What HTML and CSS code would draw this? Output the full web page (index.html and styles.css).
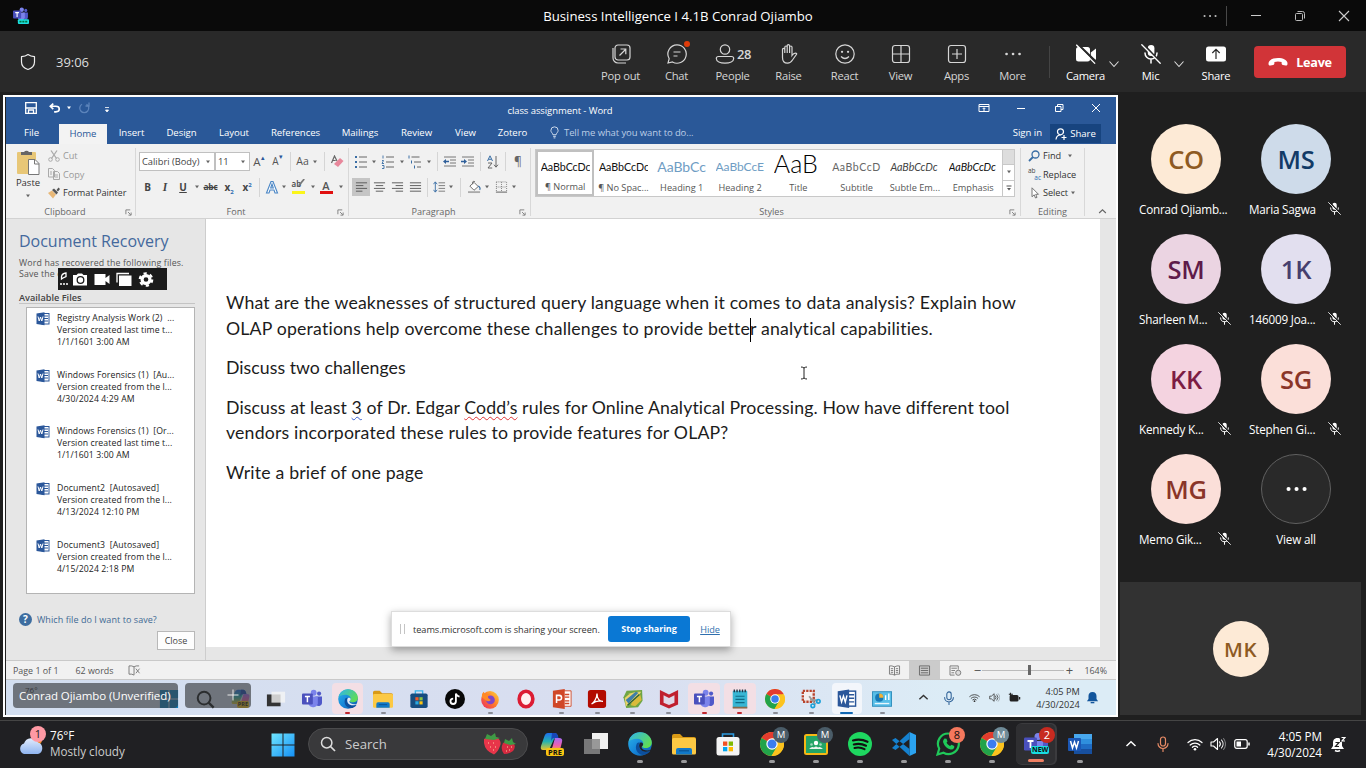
FILE: index.html
```html
<!DOCTYPE html>
<html lang="en">
<head>
<meta charset="utf-8">
<title>Business Intelligence I 4.1B Conrad Ojiambo</title>
<link rel="stylesheet" href="styles.css">
</head>
<body>
<svg class="defs" aria-hidden="true">
  <defs>
    <linearGradient id="gEdge" x1="0" y1="0" x2="1" y2="1"><stop offset="0" stop-color="#2bb5e8"/><stop offset=".55" stop-color="#1583d8"/><stop offset="1" stop-color="#0c59a4"/></linearGradient>
    <linearGradient id="gEdge2" x1="0" y1="0" x2="1" y2=".6"><stop offset="0" stop-color="#2fb4ee"/><stop offset="1" stop-color="#5fdc55"/></linearGradient>
    <linearGradient id="gWin" x1="0" y1="0" x2="1" y2="1"><stop offset="0" stop-color="#6fe6ff"/><stop offset="1" stop-color="#1590f5"/></linearGradient>
    <linearGradient id="gCopL" x1="0" y1="0" x2="0" y2="1"><stop offset="0" stop-color="#1d6ff0"/><stop offset=".5" stop-color="#25b3b0"/><stop offset="1" stop-color="#e8c52a"/></linearGradient>
    <linearGradient id="gCopR" x1="0" y1="0" x2="0" y2="1"><stop offset="0" stop-color="#a46bf5"/><stop offset=".6" stop-color="#ee5fae"/><stop offset="1" stop-color="#f59a4a"/></linearGradient>
    <linearGradient id="gCloud" x1="0" y1="0" x2="0" y2="1"><stop offset="0" stop-color="#e2ecfd"/><stop offset="1" stop-color="#8fb4f0"/></linearGradient>
    <linearGradient id="gFox" x1="1" y1="0" x2="0" y2="1"><stop offset="0" stop-color="#ffd93b"/><stop offset=".5" stop-color="#ff7a2a"/><stop offset="1" stop-color="#e8256b"/></linearGradient>
  </defs>
  <symbol id="mic-off" viewBox="0 0 20 20"><rect x="6.800" y="1" width="6.600" height="11" rx="3.300" fill="currentColor"/><path d="M4 9a6 6 0 0 0 12 0M10 15v4" fill="none" stroke="currentColor" stroke-width="1.500" stroke-linecap="round"/><path d="M2 0l18 19" stroke="var(--slash)" stroke-width="2.200"/><path d="M.8.8l18.400 18.400" stroke="currentColor" stroke-width="1.300" stroke-linecap="round"/></symbol>
  <symbol id="chev-d" viewBox="0 0 12 12"><path d="M1.500 3.500L6 8.500l4.500-5" fill="none" stroke="currentColor" stroke-width="1.100"/></symbol>
  <symbol id="chev-u" viewBox="0 0 12 12"><path d="M1.500 8L6 3.800 10.500 8" fill="none" stroke="currentColor" stroke-width="1.500"/></symbol>
  <symbol id="caret" viewBox="0 0 6 4"><path d="M1 .6h4L3 3.200z" fill="currentColor"/></symbol>
  <symbol id="launch" viewBox="0 0 8 8"><path d="M1 6V1h5M3.500 3.500l3 3M7 4v3H4" fill="none" stroke="#777" stroke-width="1"/></symbol>
  <symbol id="word16" viewBox="0 0 14 14"><rect x="6" y="1.500" width="7" height="10.500" fill="#fff" stroke="#2b579a"/><path d="M8 4h4M8 6.500h4M8 9h4" stroke="#2b579a"/><path d="M.5 1.500L8.500.3v13L.5 12z" fill="#2b579a"/><path d="M2 4.500l1.200 4.500 1.300-4 1.300 4L7 4.500" fill="none" stroke="#fff" stroke-width="1"/></symbol>
  <symbol id="edge" viewBox="0 0 24 24"><circle cx="12" cy="12" r="11.800" fill="url(#gEdge)"/><path d="M.6 9.800C2 3.800 6.800.2 12 .2c6.800 0 11.800 5 11.800 10.200 0 3.600-3 5.600-6 5.600-2.400 0-3.800-.8-3.800-1.600 0-.7 1.200-1.200 1.200-3C15.200 8.600 12 6.800 8.800 6.800 5 6.800 2 8.200.6 9.800z" fill="url(#gEdge2)"/><path d="M9 11.200c-2 3.400-1.600 9.400 4.400 11.600 3.600.6 7.200-1.200 9-4-5 2-11.400.4-11.600-5.600 0-1 .4-2 1.200-2.400-1-.4-2.200-.4-3 .4z" fill="#0c4f9e"/><path d="M12 10.800c-1.800 2.600-.8 6.600 2.600 8.200 2.800 1.200 6 .6 8.200-1-4.400 1-8.600 0-9.200-2.600-.2-1 1.600-1.400 1.600-3.400-.4-1.600-2.200-2-3.200-1.200z" fill="var(--hole)"/></symbol>
  <symbol id="folder" viewBox="0 0 24 24"><path d="M0 4q0-2 2-2h6l3 3h11q2 0 2 2v4H0z" fill="#d99a16"/><rect y="6" width="24" height="16.500" rx="1.500" fill="#fcc944"/><path d="M4 22.500V18q0-2 2-2h12q2 0 2 2v4.500z" fill="#1179c9"/><path d="M7 18.800h10" stroke="#0b5394" stroke-width="1.200"/></symbol>
  <symbol id="chrome" viewBox="0 0 24 24"><circle cx="12" cy="12" r="12" fill="#fcc31e"/><path d="M12 12L1.600 6A12 12 0 0 1 22.400 6z" fill="#e33b2e"/><path d="M12 12L1.600 6A12 12 0 0 0 11.500 24L17 14.800z" fill="#22a34a"/><path d="M12 6.200h10.500A12 12 0 0 1 11.500 24l5.600-9.200z" fill="#fcc31e"/><circle cx="12" cy="12" r="5.700" fill="#fff"/><circle cx="12" cy="12" r="4.500" fill="#3b7ded"/></symbol>
  <symbol id="teams" viewBox="0 0 24 24"><circle cx="14" cy="4.500" r="3.500" fill="#7b83eb"/><circle cx="20.500" cy="5.500" r="2.500" fill="#5059c9"/><path d="M16 9h8v7a4 4 0 0 1-7 3z" fill="#5059c9"/><path d="M8 9h11v8a6 6 0 0 1-11 2z" fill="#7b83eb"/><rect x="0" y="5.500" width="13" height="13" rx="1.200" fill="#4a50bd"/><path d="M3.500 9h6M6.500 9v7" stroke="#fff" stroke-width="1.800"/></symbol>
  <symbol id="copilot" viewBox="0 0 24 24"><path d="M8 1h7q2 0 3 3l-4 3-5 11H3q-3 0-2-4L4.500 4Q5.500 1 8 1z" fill="url(#gCopL)"/><path d="M15 6h4q4 0 3 4l-2 8H9q3 0 4-5z" fill="url(#gCopR)"/><path d="M12 1h3q2 0 3 3l.6 2H14q-2 0-3 3z" fill="#1746b8"/></symbol>
  <symbol id="wifi" viewBox="0 0 16 16"><path d="M1 6.500a10 10 0 0 1 14 0M3.200 9a7 7 0 0 1 9.600 0M5.400 11.300a3.800 3.800 0 0 1 5.200 0" fill="none" stroke="currentColor" stroke-width="1.200" stroke-linecap="round"/><circle cx="8" cy="13.300" r="1.300" fill="currentColor"/></symbol>
  <symbol id="vol" viewBox="0 0 16 16"><path d="M1 6h2.500L7.500 2.500v11L3.500 10H1z" fill="none" stroke="currentColor" stroke-width="1.100" stroke-linejoin="round"/><path d="M9.500 5.800a3.500 3.500 0 0 1 0 4.400M11.500 4a6 6 0 0 1 0 8" fill="none" stroke="currentColor" stroke-width="1.100" stroke-linecap="round"/><path d="M13.500 2.500a8.500 8.500 0 0 1 0 11" fill="none" stroke="currentColor" stroke-width="1.100" stroke-linecap="round" opacity=".4"/></symbol>
  <symbol id="mic" viewBox="0 0 16 16"><rect x="5.500" y="1" width="5" height="9" rx="2.500" fill="none" stroke="currentColor" stroke-width="1.200"/><path d="M3 7.500a5 5 0 0 0 10 0M8 12.500V15.500" fill="none" stroke="currentColor" stroke-width="1.200" stroke-linecap="round"/></symbol>
</svg>

<header class="titlebar">
  <svg class="tb-logo" viewBox="0 0 16 16"><use href="#teams" width="16" height="14"/><rect x="5.500" y="11.500" width="10.500" height="4.500" rx="1" fill="#1ce0e0"/><path d="M7 13.800h7.500" stroke="#074" stroke-width="1.500" stroke-dasharray="2 .7"/></svg>
  <span class="tb-title">Business Intelligence I 4.1B Conrad Ojiambo</span>
  <div class="tb-controls">
    <svg viewBox="0 0 16 16"><path d="M2.500 8h.1M8 8h.1M13.500 8h.1" stroke="#bbb" stroke-width="2" stroke-linecap="round"/></svg>
    <i></i>
    <svg viewBox="0 0 16 16"><path d="M3 7.500h10" stroke="#ccc"/></svg>
    <svg viewBox="0 0 16 16"><rect x="3.500" y="5.500" width="7" height="7" rx="1" fill="none" stroke="#bbb"/><path d="M5.500 3.500h5q2 0 2 2v5" fill="none" stroke="#bbb"/></svg>
    <svg viewBox="0 0 16 16"><path d="M3 3l10 10M13 3L3 13" stroke="#ccc" stroke-width="1.100"/></svg>
  </div>
</header>

<nav class="callbar">
  <svg class="shield" viewBox="0 0 18 18"><path d="M9 1.500C7 3 5 3.500 2.500 3.600V9c0 3.800 2.700 6.300 6.500 7.500 3.800-1.200 6.500-3.700 6.500-7.500V3.600C13 3.500 11 3 9 1.500z" fill="none" stroke="#eee" stroke-width="1.200" stroke-linejoin="round"/></svg>
  <span class="timer">39:06</span>
  <div class="calls">
    <div class="cb"><svg viewBox="0 0 20 20"><rect x="4" y="1" width="15" height="15" rx="3"/><path d="M2 4v10a5 5 0 0 0 5 5h8M8.500 11.500l6-6M9.500 5h5.300v5.300"/></svg><span>Pop out</span></div>
    <div class="cb"><svg viewBox="0 0 20 20"><path d="M10 .8a9.200 9.200 0 1 1-4.500 17.200L1 19l1.200-4.300A9.200 9.200 0 0 1 10 .8zM6.500 8h7M6.500 12h4"/></svg><b class="dot"></b><span>Chat</span></div>
    <div class="cb people"><div><svg viewBox="0 0 20 20"><circle cx="10" cy="5.500" r="4.700"/><path d="M3.500 12.500h13q2.200 0 2.200 2c0 3-4 4.700-8.700 4.700s-8.700-1.700-8.700-4.700q0-2 2.200-2z"/></svg><em>28</em></div><span>People</span></div>
    <div class="cb"><svg viewBox="0 0 20 20"><path d="M3.500 11V5.500q0-1.200 1.100-1.200t1.200 1.200V9 3.200Q5.800 2 7 2t1.200 1.200V9 1.800Q8.200.7 9.400.7t1.200 1.200V9 3.200Q10.600 2 11.800 2T13 3.200v8.300c1-1.500 2.500-2.700 4.200-2.200q.9.300.2 1.200L13.500 16c-1.200 2-2.500 3.200-5 3.200-3.500 0-5-2.700-5-5.700z"/></svg><span>Raise</span></div>
    <div class="cb"><svg viewBox="0 0 20 20"><circle cx="10" cy="10" r="9.200"/><path d="M6 12.500q4 4 8 0"/><path d="M7 7.800h.1M13 7.800h.1" stroke-width="2.200" stroke-linecap="round"/></svg><span>React</span></div>
    <div class="cb"><svg viewBox="0 0 20 20"><rect x="1.500" y="1.500" width="17" height="17" rx="2.500"/><path d="M10 1.500v17M1.500 10h17"/></svg><span>View</span></div>
    <div class="cb"><svg viewBox="0 0 20 20"><rect x="1.500" y="1.500" width="17" height="17" rx="2.500"/><path d="M10 5v10M5 10h10"/></svg><span>Apps</span></div>
    <div class="cb"><svg viewBox="0 0 20 20"><path d="M3.500 10h.1M10 10h.1M16.500 10h.1" stroke-width="2.600" stroke-linecap="round"/></svg><span>More</span></div>
    <i class="cb-sep"></i>
    <div class="cb on"><svg viewBox="0 0 20 20"><rect x="0" y="3" width="14" height="14.500" rx="2.500" fill="#fff" stroke="none"/><path d="M14.800 8.500L20 4.500v11.500l-5.200-3.500z" fill="#fff" stroke="none"/><path d="M1.500 0l19 18.500" stroke="#292929" stroke-width="2.400"/><path d="M.3.800l18.800 18.800" stroke="#fff" stroke-width="1.300"/></svg><span>Camera</span></div>
    <svg class="cv"><use href="#chev-d"/></svg>
    <div class="cb on mic"><svg class="plain"><use href="#mic-off"/></svg><span>Mic</span></div>
    <svg class="cv"><use href="#chev-d"/></svg>
    <div class="cb on"><svg viewBox="0 0 20 20"><rect x="0" y="2.500" width="20" height="15" rx="2.500" fill="#fff" stroke="none"/><path d="M10 15V5.500M6.300 9L10 5.300 13.700 9" stroke="#292929"/></svg><span>Share</span></div>
  </div>
  <button class="leave"><svg viewBox="0 0 20 10"><path d="M10 1c5 0 9.500 2 9.500 5.500 0 1.800-.6 2.200-2 2l-2.600-.6c-1-.3-1.300-.8-1.300-1.700V5Q10 4 6.400 5v1.200c0 .9-.3 1.400-1.300 1.700l-2.600.6c-1.400.2-2-.2-2-2C.5 3 5 1 10 1z" fill="#fff"/></svg>Leave</button>
</nav>

<main class="meeting">
  <section class="stage">
    <div class="w-title">
      <div class="qat">
        <svg viewBox="0 0 12 12"><path d="M.7.700h10.600v10.600H.7zM.7 6h10.600M3.500 11V8h5v3" fill="none" stroke="#fff" stroke-width="1.300"/></svg>
        <svg viewBox="0 0 14 12"><path d="M5 .8L1.500 4 5 7.200M1.500 4H8q4 0 4 3.200T8 10.500H6" fill="none" stroke="#fff" stroke-width="1.900"/></svg>
        <svg class="car"><use href="#caret"/></svg>
        <svg viewBox="0 0 12 12"><path d="M4 2.200a4.500 4.500 0 1 0 4.500 0M11 .5v3.500H7.500" fill="none" stroke="#5c84bb" stroke-width="1.300"/></svg>
        <svg viewBox="0 0 12 12"><path d="M4 5.500h4M4.500 8h3L6 10z" stroke="#fff" fill="#fff" stroke-width=".8"/></svg>
      </div>
      <span class="w-name">class assignment - Word</span>
      <div class="w-ctl">
        <svg viewBox="0 0 12 12"><path d="M1 2.500h10v7H1zM1 4.500h10M6 9V6M4.700 7L6 5.700 7.300 7" fill="none" stroke="#fff"/></svg>
        <svg viewBox="0 0 12 12"><path d="M2 6.500h8" stroke="#fff"/></svg>
        <svg viewBox="0 0 12 12"><path d="M2.500 4.500h5.500v5h-5.500zM4.500 4.500v-2H10v5H8" fill="none" stroke="#fff"/></svg>
        <svg viewBox="0 0 12 12"><path d="M2 2l8 8M10 2l-8 8" stroke="#fff"/></svg>
      </div>
    </div>
    <div class="w-tabs">
      <span class="file-tab">File</span><span class="active">Home</span><span>Insert</span><span>Design</span><span>Layout</span><span>References</span><span>Mailings</span><span>Review</span><span>View</span><span>Zotero</span>
      <span class="tell"><svg viewBox="0 0 10 14"><path d="M3.200 9.500Q3 8.300 2 7.200 1 6 1 4.700A4 4 0 0 1 9 4.700Q9 6 8 7.200 7 8.300 6.800 9.500zM3.500 11.300h3M4 13h2" fill="none" stroke="#dfe8f5"/></svg>Tell me what you want to do...</span>
      <span class="signin">Sign in</span>
      <span class="wshare"><svg viewBox="0 0 12 12"><circle cx="5.500" cy="3.800" r="3" fill="none" stroke="#fff" stroke-width="1.200"/><path d="M1 11.500Q1.500 7 5.500 7M9 7v5M6.500 9.500h5" fill="none" stroke="#fff" stroke-width="1.200"/></svg>Share</span>
    </div>

    <div class="ribbon">
      <div class="grp clip">
        <div class="paste"><svg viewBox="0 0 24 26"><rect x="1" y="3" width="19" height="22" rx="1" fill="#e8c777"/><path d="M5 6V3h3a3 3 0 0 1 5 0h3v3z" fill="#666"/><path d="M12.500 10.500h6.500l4 4v11H12.500z" fill="#fff" stroke="#777"/><path d="M18.500 10.500V15H23" fill="none" stroke="#777"/></svg><span>Paste</span><svg class="car"><use href="#caret"/></svg></div>
        <div class="clip-list">
          <div class="dim"><svg viewBox="0 0 12 12"><path d="M3 .5l5.500 8M9 .5L3.500 8.500" stroke="#aaa" stroke-width="1.300"/><circle cx="2.500" cy="9.500" r="1.800" fill="none" stroke="#aaa"/><circle cx="9.500" cy="9.500" r="1.800" fill="none" stroke="#aaa"/></svg>Cut</div>
          <div class="dim"><svg viewBox="0 0 12 12"><path d="M.5.500h4l2 2v6.500h-6zM5.500 3.500h4l2 2V11.500h-6z" fill="#f1f1f1" stroke="#aaa"/><path d="M2 4h2M2 6h2M7 7h3M7 9h3" stroke="#aaa"/></svg>Copy</div>
          <div><svg viewBox="0 0 12 12"><path d="M0 6l4-2.500L8 7.500 5 11.500z" fill="#e8b878"/><path d="M4 3l2-1.500L10 5.500 8.500 7.500zM8.500 3L10.500.5l1.500 1.500L10 4.500z" fill="#555"/></svg>Format Painter</div>
        </div>
        <div class="glabel">Clipboard<svg><use href="#launch"/></svg></div>
      </div>

      <div class="grp font">
        <div class="frow1">
          <div class="combo">Calibri (Body)<svg class="car"><use href="#caret"/></svg></div>
          <div class="combo">11<svg class="car"><use href="#caret"/></svg></div>
          <div class="ga">A<sup>▴</sup></div><div class="ga small">A<sup>▾</sup></div><i></i>
          <div class="ga aa">Aa<svg class="car"><use href="#caret"/></svg></div><i></i>
          <svg class="ic" viewBox="0 0 14 14"><path d="M1.500 8L4.500 1 7 6M2.700 5.500h3" fill="none" stroke="#666" stroke-width="1.200"/><path d="M4 9l6-6 3.500 3-5.500 6z" fill="#e8879b"/></svg>
        </div>
        <div class="frow2">
          <b>B</b><b class="it">I</b><b class="un">U</b><svg class="car"><use href="#caret"/></svg><b class="st">abc</b><b>x<sub>2</sub></b><b>x<sup>2</sup></b><i></i>
          <svg class="ic" viewBox="0 0 14 14"><path d="M1.500 13L6 1.500h2L12.500 13H10L9 10H5l-1 3zM5.700 8h2.600L7 4z" fill="#fff" stroke="#4a86c5" stroke-width="1.100"/></svg><svg class="car"><use href="#caret"/></svg>
          <div class="hl">ab<svg viewBox="0 0 14 14"><path d="M12.500 0L6 8" stroke="#777" stroke-width="2"/></svg></div><svg class="car"><use href="#caret"/></svg>
          <div class="fc">A</div><svg class="car"><use href="#caret"/></svg>
        </div>
        <div class="glabel">Font<svg><use href="#launch"/></svg></div>
      </div>

      <div class="grp para">
        <div class="prow1">
          <svg class="ic" viewBox="0 0 14 14"><path d="M5 2h8M5 7h8M5 12h8" stroke="#666"/><path d="M1 2h2M1 7h2M1 12h2" stroke="#3a6ea5" stroke-width="2"/></svg><svg class="car"><use href="#caret"/></svg>
          <svg class="ic" viewBox="0 0 14 14"><path d="M5 2h8M5 7h8M5 12h8" stroke="#666"/><path d="M2 .5v3M1 5.500h1.500L1 8.500h2M1 10.500h2v3H1" fill="none" stroke="#3a6ea5" stroke-width=".9"/></svg><svg class="car"><use href="#caret"/></svg>
          <svg class="ic" viewBox="0 0 14 14"><path d="M3.500 2h8M6 7h7M9 12h4" stroke="#666"/><path d="M1 .5v3M3.500 5.500v3M6.500 10.500v3" stroke="#3a6ea5"/></svg><svg class="car"><use href="#caret"/></svg><i></i>
          <svg class="ic" viewBox="0 0 14 14"><path d="M1 2h12M7 5h6M7 8h6M1 11h12" stroke="#777"/><path d="M0 6.500l3-2.500v1.700h3v1.600H3V9z" fill="#2f5f9a"/></svg>
          <svg class="ic" viewBox="0 0 14 14"><path d="M1 2h12M7 5h6M7 8h6M1 11h12" stroke="#777"/><path d="M6 6.500L3 4v1.700H0v1.600h3V9z" fill="#2f5f9a"/></svg><i></i>
          <svg class="ic" viewBox="0 0 14 14"><path d="M1.500 6L4 .8 6.500 6M2.500 4.300h3" fill="none" stroke="#3a6ea5"/><path d="M2 8h4l-4 5h4.200" fill="none" stroke="#666"/><path d="M10 1v11M8 9.700l2 2.500 2-2.500" fill="none" stroke="#666"/></svg><i></i>
          <span class="pil">¶</span>
        </div>
        <div class="prow2">
          <div class="sel"><svg class="ic" viewBox="0 0 14 14"><path d="M1 2.500h12M1 5.500h8M1 8.500h12M1 11.500h7" stroke="#555"/></svg></div>
          <svg class="ic" viewBox="0 0 14 14"><path d="M1 2.500h12M3 5.500h8M1 8.500h12M3 11.500h8" stroke="#555"/></svg>
          <svg class="ic" viewBox="0 0 14 14"><path d="M1 2.500h12M5 5.500h8M1 8.500h12M5 11.500h8" stroke="#555"/></svg>
          <svg class="ic" viewBox="0 0 14 14"><path d="M1 2.500h12M1 5.500h12M1 8.500h12M1 11.500h12" stroke="#555"/></svg><i></i>
          <svg class="ic" viewBox="0 0 14 14"><path d="M6 2.500h7M6 5.500h7M6 8.500h7M6 11.500h7" stroke="#777"/><path d="M2.500 1.500v11M.5 4l2-2.500 2 2.500M.5 10l2 2.500 2-2.500" fill="none" stroke="#3a6ea5"/></svg><svg class="car"><use href="#caret"/></svg><i></i>
          <svg class="ic" viewBox="0 0 14 14"><path d="M2 6l4.500-4L11 6.500 6.500 10.500zM5 4V1.500q1.500-1.500 2.500 0" fill="#fff" stroke="#666"/><path d="M11 6q3 2 1.500 4" stroke="#3a6ea5" fill="none" stroke-width="1.300"/><path d="M0 12.500h13" stroke="#aaa" stroke-width="2"/></svg><svg class="car"><use href="#caret"/></svg>
          <svg class="ic" viewBox="0 0 14 14"><path d="M1.500 1.500h11v11M1.500 1.500v11M7 1.500v11M1.500 7h11" fill="none" stroke="#777" stroke-dasharray="1 1.200"/><path d="M1 12.500h12" stroke="#555"/></svg><svg class="car"><use href="#caret"/></svg>
        </div>
        <div class="glabel">Paragraph<svg><use href="#launch"/></svg></div>
      </div>

      <div class="grp styles">
        <div class="gallery">
          <div class="sty picked"><p>AaBbCcDc</p><span>¶ Normal</span></div>
          <div class="sty"><p>AaBbCcDc</p><span>¶ No Spac...</span></div>
          <div class="sty h1"><p>AaBbCc</p><span>Heading 1</span></div>
          <div class="sty h2"><p>AaBbCcE</p><span>Heading 2</span></div>
          <div class="sty tt"><p>AaB</p><span>Title</span></div>
          <div class="sty sb"><p>AaBbCcD</p><span>Subtitle</span></div>
          <div class="sty se"><p>AaBbCcDc</p><span>Subtle Em...</span></div>
          <div class="sty em"><p>AaBbCcDc</p><span>Emphasis</span></div>
          <div class="gscroll"><div></div><div><svg class="car"><use href="#caret"/></svg></div><div><svg viewBox="0 0 6 6"><path d="M.5 1h5" stroke="#555"/><path d="M1 3h4L3 5.500z" fill="#555"/></svg></div></div>
        </div>
        <div class="glabel">Styles<svg><use href="#launch"/></svg></div>
      </div>

      <div class="grp edit">
        <div class="elist">
          <div><svg viewBox="0 0 12 12"><circle cx="7.500" cy="4.500" r="3.500" fill="none" stroke="#3a6ea5" stroke-width="1.300"/><path d="M5 7L1 11" stroke="#3a6ea5" stroke-width="1.800"/></svg>Find <svg class="car far"><use href="#caret"/></svg></div>
          <div><span class="rep"><span>ab</span><u>ac</u></span>Replace</div>
          <div><svg viewBox="0 0 12 12"><path d="M4 .8v9l2.200-2L7.500 11l1.500-.6L7.700 7.300h2.800z" fill="#fff" stroke="#777"/></svg>Select<svg class="car"><use href="#caret"/></svg></div>
        </div>
        <div class="glabel">Editing</div>
      </div>
      <svg class="collapse"><use href="#chev-u"/></svg>
    </div>

    <div class="w-body">
      <aside class="recovery">
        <h1>Document Recovery</h1>
        <p>Word has recovered the following files.<br>Save the ones you wish to keep.</p>
        <h2>Available Files</h2>
        <div class="files">
          <div class="file"><svg><use href="#word16"/></svg><div>Registry Analysis Work (2)&nbsp; ...<br>Version created last time t...<br>1/1/1601 3:00 AM</div></div>
          <div class="file"><svg><use href="#word16"/></svg><div>Windows Forensics (1)&nbsp; [Au...<br>Version created from the l...<br>4/30/2024 4:29 AM</div></div>
          <div class="file"><svg><use href="#word16"/></svg><div>Windows Forensics (1)&nbsp; [Or...<br>Version created last time t...<br>1/1/1601 3:00 AM</div></div>
          <div class="file"><svg><use href="#word16"/></svg><div>Document2&nbsp; [Autosaved]<br>Version created from the l...<br>4/13/2024 12:10 PM</div></div>
          <div class="file"><svg><use href="#word16"/></svg><div>Document3&nbsp; [Autosaved]<br>Version created from the l...<br>4/15/2024 2:18 PM</div></div>
        </div>
        <div class="which"><b>?</b>Which file do I want to save?</div>
        <div class="close">Close</div>
        <div class="capture">
          <svg class="mini" viewBox="0 0 8 14"><path d="M1.500 7V4.500Q2 1.500 6 1v3.500L3 6z" fill="none" stroke="#fff" stroke-width="1.300"/><path d="M0 12h2M3 12h2M6 12h2" stroke="#fff" stroke-width="1.500"/></svg>
          <svg viewBox="0 0 16 14"><path d="M1 2.500h3.500L6 1h4l1.500 1.500H15V13H1z" fill="#fff"/><circle cx="8.500" cy="7.500" r="3.300" fill="#fff" stroke="#1b1b1b" stroke-width="1.300"/></svg>
          <svg viewBox="0 0 16 14"><path d="M.5 1.500h11v4l4-3v9l-4-3v4H.5z" fill="#fff"/></svg>
          <svg viewBox="0 0 16 14"><path d="M1 10V1h12" fill="none" stroke="#fff" stroke-width="1.300"/><rect x="3" y="3" width="12.500" height="10.500" fill="#fff"/></svg>
          <svg viewBox="0 0 16 16"><circle cx="8" cy="8" r="4.200" fill="none" stroke="#fff" stroke-width="3.400"/><circle cx="8" cy="8" r="6.600" fill="none" stroke="#fff" stroke-width="2.400" stroke-dasharray="3.456 3.456"/></svg>
        </div>
      </aside>
      <article class="page">
        <p class="wide">What are the weaknesses of structured query language when it comes to data analysis? Explain how</p>
        <p class="wide end">OLAP operations help overcome these challenges to provide bette<i class="cursor"></i>r analytical capabilities.</p>
        <p class="end short">Discuss two challenges</p>
        <p>Discuss at least <span class="gram">3</span> of Dr. Edgar <span class="spell">Codd’s</span> rules for Online Analytical Processing. How have different tool</p>
        <p class="end wide">vendors incorporated these rules to provide features for OLAP?</p>
        <p class="wide">Write a brief of one page</p>
        <svg class="ibeam" viewBox="0 0 8 14"><path d="M1 1q2 0 3 1 1-1 3-1M4 2v10M1 13q2 0 3-1 1 1 3 1" fill="none" stroke="#222"/></svg>
      </article>
      <div class="sharing"><i></i><span>teams.microsoft.com is sharing your screen.</span><b>Stop sharing</b><u>Hide</u></div>
    </div>

    <div class="w-status">
      <span>Page 1 of 1</span><span class="words">62 words</span>
      <svg class="proof" viewBox="0 0 14 12"><path d="M6.500 2Q4 .5 1 1v9q3-.5 5.500 1V2q2-1.500 5.500-1M8.500 4l4 5M12.500 4l-4 5" fill="none" stroke="#777"/></svg>
      <div class="views">
        <div><svg viewBox="0 0 14 12"><path d="M7 2Q4 .5 1.500 1v9q3-.5 5.500 1 2.500-1.500 5.500-1V1Q10 .5 7 2v9M3 4h2.500M3 6h2.500M3 8h2.500M8.500 4H11M8.500 6H11M8.500 8H11" fill="none" stroke="#777"/></svg></div>
        <div class="cur"><svg viewBox="0 0 14 12"><path d="M1.500 1h11v10h-11zM3 3.500h8M3 6h8M3 8.500h8" fill="none" stroke="#666"/></svg></div>
        <div><svg viewBox="0 0 14 12"><path d="M10 5V1H1v10h5M2.500 3.500h6M2.500 6h4M2.500 8.500h3" fill="none" stroke="#777"/><circle cx="10" cy="8.500" r="2.800" fill="#ddd" stroke="#777"/></svg></div>
      </div>
      <div class="slider"><em>−</em><div></div><em>+</em></div><span>164%</span>
    </div>

    <div class="s-task">
      <div class="s-apps">
        <div><svg viewBox="0 0 22 22"><path d="M1 1h9.500v9.500H1zM11.500 1H21v9.500h-9.500zM1 11.500h9.500V21H1zM11.500 11.500H21V21h-9.500z" fill="#0a84c8"/></svg></div>
        <div><svg viewBox="0 0 22 22"><circle cx="10" cy="10" r="7" fill="none" stroke="#111" stroke-width="2.200"/><path d="M15 15l5.500 5.500" stroke="#111" stroke-width="2.500"/></svg></div>
        <div><svg><use href="#copilot"/></svg><b class="pre">PRE</b></div>
        <div><svg viewBox="0 0 22 22"><rect x="1" y="6" width="15" height="13" fill="#333"/><rect x="6" y="3" width="15" height="12" fill="#f5f5f5" opacity=".8"/></svg></div>
        <div><svg><use href="#teams"/></svg></div>
        <div class="hot"><svg><use href="#edge"/></svg><s></s></div>
        <div><svg><use href="#folder"/></svg><s></s></div>
        <div><svg viewBox="0 0 22 22"><path d="M7 6V2h8v4" fill="none" stroke="#39b3ea" stroke-width="1.500"/><rect x="1.500" y="5" width="19" height="16" rx="2" fill="#164d80"/><path d="M7 9h3.500v3.500H7z" fill="#f05a28"/><path d="M11.500 9H15v3.500h-3.500z" fill="#8cc63e"/><path d="M7 13.500h3.500V17H7z" fill="#29a9e1"/><path d="M11.500 13.500H15V17h-3.500z" fill="#fdc50f"/></svg></div>
        <div><svg viewBox="0 0 22 22"><circle cx="11" cy="11" r="11" fill="#080808"/><path d="M12 5v8.500a3 3 0 1 1-3-3M12 5q1 3 4 3.500" fill="none" stroke="#fff" stroke-width="2"/></svg></div>
        <div><svg viewBox="0 0 22 22"><circle cx="11" cy="12" r="9.700" fill="url(#gFox)"/><circle cx="11.500" cy="12" r="4.800" fill="#8047c7"/><path d="M2 9Q1.500 5 4 3l2 3 6-1q-4 2-3 5l3 2q-3 3-6 0z" fill="#ff8a25"/></svg><s></s></div>
        <div><svg viewBox="0 0 22 22"><ellipse cx="11" cy="11" rx="7.500" ry="8.500" fill="#fff0f0" stroke="#dc1c33" stroke-width="4"/></svg></div>
        <div><svg viewBox="0 0 22 22"><path d="M11 2h10v17H11z" fill="#fff" stroke="#d04727"/><path d="M14 6h5M14 9h5M14 13h5M14 16h5" stroke="#d04727" stroke-width="1.500"/><path d="M1 2l13-2v22L1 20z" fill="#d04727"/><path d="M5 15.500V7h3q2.500 0 2.500 2.500T8 12H5" fill="none" stroke="#fff" stroke-width="1.700"/></svg><s></s></div>
        <div><svg viewBox="0 0 22 22"><rect x="1" y="1" width="20" height="20" rx="3" fill="#b30b00"/><path d="M5 16.500c2-1 6-6 6-11.500 0 6 3 9 6.500 8.500-5-1-8.500 0-12.500 3z" fill="none" stroke="#fff" stroke-width="1.400"/></svg><s></s></div>
        <div><svg viewBox="0 0 22 22"><path d="M4 2l17-1 .5 12-5 7-13 1L.5 9z" fill="#6fa544"/><path d="M2 10q6-8 18-7l-6 9-11 7z" fill="#e9d46a"/><path d="M3 12L14 3l3 1L6 16z" fill="#3f7ea8"/><path d="M11 12l8-6 1.500 6-7 7-5-1z" fill="#d9bb3a"/><path d="M5 18L18 6" stroke="#2c5f3a" stroke-width="1.500"/></svg><s></s></div>
        <div><svg viewBox="0 0 22 22"><path d="M1 1l10 5 10-5v16l-10 4.500L1 17z" fill="#c0202e"/><path d="M5 7l6 3 6-3v8l-6 2.700L5 15z" fill="#dfd9e8"/></svg><s></s></div>
        <div class="hot"><svg><use href="#teams"/></svg><s></s></div>
        <div class="hot"><svg viewBox="0 0 22 22"><rect x="3" y="2" width="16" height="19" rx="1" fill="#38b6d4"/><path d="M3 20.500h16" stroke="#8a6a4a" stroke-width="2"/><path d="M4 2h14" stroke="#234" stroke-width="3" stroke-dasharray="1.500 1.500"/><path d="M6 8h10M6 11.500h10M6 15h10" stroke="#0f6b86" stroke-width="1.300"/></svg><s></s></div>
        <div><svg><use href="#chrome"/></svg><s></s></div>
        <div><svg viewBox="0 0 22 22"><rect x="2" y="2" width="12" height="12" fill="#f3eeee" stroke="#b8442c" stroke-width="2.600" stroke-dasharray="2.500 1.200"/><path d="M9 8l7 9M19 13l-9-2" stroke="#999" stroke-width="2"/><circle cx="13" cy="18.500" r="2" fill="none" stroke="#1aa0d8" stroke-width="1.800"/><circle cx="19" cy="13.500" r="2" fill="none" stroke="#1aa0d8" stroke-width="1.800"/></svg><s></s></div>
        <div class="act"><svg><use href="#word16"/></svg><s></s></div>
        <div><svg viewBox="0 0 22 22"><rect x=".5" y="3" width="21" height="16" fill="#58bfe8" stroke="#2c8cba"/><circle cx="8" cy="9.500" r="4.500" fill="#1778b5"/><path d="M8 9.500V5a4.500 4.500 0 0 1 4.500 4.500z" fill="#f5b133"/><path d="M15 12V7M18.500 12V5" stroke="#fff" stroke-width="1.500"/><path d="M3 16h16" stroke="#e8f6fc" stroke-width="1.500"/></svg><s></s></div>
      </div>
      <div class="s-tray">
        <svg><use href="#chev-u"/></svg>
        <svg class="bl"><use href="#mic"/></svg>
        <svg><use href="#wifi"/></svg>
        <svg><use href="#vol"/></svg>
        <svg viewBox="0 0 16 16"><rect x="2" y="5" width="11" height="8" rx="2" fill="#222"/><path d="M14.300 7.500v3" stroke="#222" stroke-width="1.500"/><path d="M3 2v5M1 4h5" stroke="#222" stroke-width="1.300"/></svg>
        <div class="s-clock">4:05 PM<br>4/30/2024</div>
        <svg class="bell" viewBox="0 0 14 14"><path d="M7 1c3 0 4.300 2 4.300 4.500v3L13 11H1l1.700-2.500v-3C2.700 3 4 1 7 1z" fill="#12559c"/><path d="M5 12.500h4" stroke="#12559c" stroke-width="1.500"/></svg>
      </div>
      <div class="ghost">76°</div>
      <div class="tag">Conrad Ojiambo (Unverified)</div>
      <div class="tag2"><svg viewBox="0 0 12 12"><path d="M6 .5v11M.5 6h11" stroke="#e8e8e8"/></svg></div>
    </div>
  </section>

  <section class="roster">
    <div class="people-grid">
      <div class="p"><b class="av co">CO</b><div><span>Conrad Ojiamb...</span></div></div>
      <div class="p"><b class="av ms">MS</b><div><span>Maria Sagwa</span><svg><use href="#mic-off"/></svg></div></div>
      <div class="p"><b class="av sm">SM</b><div><span>Sharleen M...</span><svg><use href="#mic-off"/></svg></div></div>
      <div class="p"><b class="av k1">1K</b><div><span>146009 Joa...</span><svg><use href="#mic-off"/></svg></div></div>
      <div class="p"><b class="av kk">KK</b><div><span>Kennedy K...</span><svg><use href="#mic-off"/></svg></div></div>
      <div class="p"><b class="av sg">SG</b><div><span>Stephen Gi...</span><svg><use href="#mic-off"/></svg></div></div>
      <div class="p"><b class="av sg">MG</b><div><span>Memo Gik...</span><svg><use href="#mic-off"/></svg></div></div>
      <div class="p all"><b class="av more"><svg viewBox="0 0 20 6"><path d="M2 3h.1M10 3h.1M18 3h.1" stroke="#fff" stroke-width="4" stroke-linecap="round"/></svg></b><div><span>View all</span></div></div>
    </div>
    <div class="self"><b class="av co">MK</b></div>
  </section>
</main>

<footer class="taskbar">
  <div class="weather">
    <svg viewBox="0 0 26 30"><circle cx="19" cy="13" r="5" fill="#f08a25"/><path d="M6 27a5.500 5.500 0 0 1 0-10.500 7.500 7.500 0 0 1 14-1A6 6 0 0 1 20 27z" fill="url(#gCloud)"/></svg><b>1</b>
    <div>76°F<br><span>Mostly cloudy</span></div>
  </div>
  <svg class="start" viewBox="0 0 24 24"><path d="M.5.500h11v11H.5zM12.500.5h11v11h-11zM.5 12.500h11v11H.5zM12.500 12.500h11v11h-11z" fill="url(#gWin)"/></svg>
  <div class="search"><svg viewBox="0 0 16 16"><circle cx="6.700" cy="6.700" r="5.200" fill="none" stroke="#ddd" stroke-width="1.500"/><path d="M10.500 10.500L15 15" stroke="#ddd" stroke-width="1.700"/></svg><span>Search</span>
    <svg class="berry" viewBox="0 0 34 24"><path d="M1 7q6-4 14-1 4 4 2 8-2 6-6 8.500Q2 19 1 11z" fill="#e8354a"/><path d="M20 11q5-3 11 1 2 3-1 7-4 3-9 3-4-5-1-11z" fill="#d72a40"/><path d="M2 7l2-5 4 2 4-3 1 4 4 1-6 2zM21 11l1-4 4 2 3-3 1 4 3 2-6 1z" fill="#3f9a45"/><path d="M5 11h1M10 11h1M7 15h1M12 15h1M10 18h1M24 15h1M28 15h1M26 18h1M23 19h1" stroke="#ffd0a0" stroke-width="1.200"/></svg>
  </div>
  <div class="apps">
    <div><svg><use href="#copilot"/></svg><b class="pre">PRE</b></div>
    <div><svg viewBox="0 0 24 24"><rect x="8" y="1" width="16" height="16" fill="#f0f0f0"/><rect x="0" y="7" width="16" height="15" fill="#888" opacity=".85"/></svg></div>
    <div><svg><use href="#edge"/></svg><s></s></div>
    <div><svg><use href="#folder"/></svg><s></s></div>
    <div><svg viewBox="0 0 24 24"><path d="M6.500 6V2h11v4" fill="none" stroke="#2d9be0" stroke-width="1.600"/><rect x=".5" y="5" width="23" height="18.500" rx="2.500" fill="#f4f4f4"/><path d="M7 9.500h4.300v4.300H7z" fill="#f25022"/><path d="M12.700 9.500H17v4.300h-4.300z" fill="#7fba00"/><path d="M7 15h4.300v4.300H7z" fill="#00a4ef"/><path d="M12.700 15H17v4.300h-4.300z" fill="#ffb900"/></svg></div>
    <div><svg><use href="#chrome"/></svg><b class="m">M</b><s></s></div>
    <div><svg viewBox="0 0 24 24"><rect x="1" y="3" width="22" height="19" rx="1.500" fill="#23a566" stroke="#f6b815" stroke-width="2"/><circle cx="12" cy="11" r="2.200" fill="#fff"/><circle cx="7.500" cy="12.500" r="1.300" fill="#9fd8bb"/><circle cx="16.500" cy="12.500" r="1.300" fill="#9fd8bb"/><path d="M5 17q3-3 5-1.500 2-2 4 0 2-1.500 5 1.500z" fill="#e8f6ee"/></svg><b class="m">M</b><s></s></div>
    <div><svg viewBox="0 0 24 24"><circle cx="12" cy="12" r="12" fill="#1ed760"/><path d="M5 8.500q7.500-2.200 14.500 1.300M5.800 12.500q6.500-1.700 12.200 1.200M6.500 16q5.500-1.300 10 1.200" fill="none" stroke="#111" stroke-width="2.100" stroke-linecap="round"/></svg><s></s></div>
    <div><svg viewBox="0 0 24 24"><path d="M17.500 0L24 3v18l-6.500 3z" fill="#2ba3f0"/><path d="M17.500 0v7L3.500 18 0 16zM17.500 24v-7L3.500 6 0 8z" fill="#1581cf"/></svg><s></s></div>
    <div><svg viewBox="0 0 24 24"><path d="M12.500 1.500a10.300 10.300 0 1 1-5 19.300L1.500 22.500l1.700-5.800A10.300 10.300 0 0 1 12.500 1.500z" fill="none" stroke="#1fc859" stroke-width="2.200"/><path d="M8.500 6.500l2 .2 1 2.800-1 1.300q1 2 3.500 3.300l1.500-1.300 2.700 1.300v1.600q-1.200 2.200-3.700 1.800Q9 16 7 10q0-2.500 1.500-3.500z" fill="#1fc859"/></svg><b class="m eight">8</b><s></s></div>
    <div><svg><use href="#chrome"/></svg><b class="m lite">M</b><s></s></div>
    <div class="cur"><svg><use href="#teams"/></svg><b class="new">NEW</b><b class="m two">2</b><s></s></div>
    <div><svg viewBox="0 0 24 24"><path d="M6 2h18v20H6z" fill="#2f8fdd"/><path d="M6 2h18v5H6z" fill="#48a8ee"/><path d="M6 12h18v5H6z" fill="#1f6cc4"/><path d="M6 17h18v5H6z" fill="#174f9e"/><rect y="6" width="13" height="13" rx="1" fill="#1b57b5"/><path d="M2.500 9l2 7 2-6 2 6 2-7" fill="none" stroke="#fff" stroke-width="1.500"/></svg><s></s></div>
  </div>
  <div class="tray">
    <svg><use href="#chev-u"/></svg>
    <svg class="or"><use href="#mic"/></svg>
    <svg><use href="#wifi"/></svg>
    <svg><use href="#vol"/></svg>
    <svg viewBox="0 0 16 16"><rect x=".7" y="3.700" width="12.500" height="8.600" rx="2" fill="none" stroke="#fff" stroke-width="1.200"/><rect x="2.500" y="5.500" width="4.500" height="5" fill="#fff"/><path d="M15 6.500v3" stroke="#fff" stroke-width="1.500"/></svg>
    <div class="clock">4:05 PM<br>4/30/2024</div>
    <svg class="dnd" viewBox="0 0 16 16"><path d="M7.500 2C4 2 3 4.500 3 7v3L1 13H14L12 10V7c0-2.500-1-5-4.500-5z" fill="#fff"/><path d="M5 14.500q2.500 1.500 5 0" stroke="#fff" fill="none" stroke-width="1.500"/><path d="M5.500 6.500h3.500l-3.500 4H9" fill="none" stroke="#222" stroke-width="1.200"/><path d="M10 1h6v5h-6z" fill="#202023"/><path d="M11.500 1.500H15L12 5h3" fill="none" stroke="#fff" stroke-width="1.200"/></svg>
  </div>
</footer>
</body>
</html>
```

FILE: styles.css
```css
* { box-sizing: border-box; margin: 0; padding: 0; }
body { width: 1366px; height: 768px; overflow: hidden; display: flex; flex-direction: column; background: #1f1f1f; color: #fff; font-family: "Open Sans", "Noto Sans", sans-serif; font-size: 12px; --hole: #20212a; }
svg { display: block; flex: none; }
.defs { position: absolute; width: 0; height: 0; }

/* window title bar */
.titlebar { height: 31px; flex: none; background: #0a0a0a; display: grid; grid-template-columns: 200px 956px 210px; align-items: center; }
.tb-logo { width: 17px; height: 17px; margin-left: 12px; }
.tb-title { text-align: center; font-size: 13.200px; letter-spacing: -.01px; line-height: 30px; }
.tb-controls { display: grid; grid-template-columns: 24px 8px 52px 36px 52px; margin-left: 42px; justify-items: center; align-items: center; }
.tb-controls svg { width: 16px; height: 16px; }
.tb-controls i { width: 1px; height: 20px; background: #484848; }

/* call controls */
.callbar { height: 61px; flex: none; background: #292929; display: flex; align-items: center; }
.shield { width: 18px; height: 18px; margin-left: 19px; }
.timer { width: 60px; margin-left: 19px; color: #ddd; font-size: 13px; letter-spacing: -.05px; }
.calls { margin-left: 476.500px; display: flex; align-items: center; height: 61px; flex: none; }
.cb { width: 56px; height: 42px; display: flex; flex-direction: column; align-items: center; gap: 5px; position: relative; color: #d6d6d6; }
.cb svg { width: 20px; height: 20px; fill: none; stroke: #d6d6d6; stroke-width: 1.200; margin-top: 3px; }
.cb span { font-size: 11.200px; line-height: 14px; letter-spacing: -.25px; white-space: nowrap; }
.cb.on { color: #fff; }
.cb svg.plain { stroke: none; color: #fff; --slash: #292929; }
.people div { display: flex; gap: 2px; align-items: center; margin-left: 1px; }
.people em { font: 600 13px/20px "Open Sans"; letter-spacing: -.4px; margin-top: 3px; }
.dot { position: absolute; right: 15px; top: 0; width: 6px; height: 6px; border-radius: 50%; background: #e03c0a; }
.cb-sep { width: 1px; height: 32px; background: #444; margin: 0 8px; }
.cv { width: 12px; height: 12px; margin: 4px -5px 0 -6px; color: #ddd; }
.cb.mic { margin: 0 0 0 8px; }
.calls .cb.mic + .cv { margin-left: -6px; }
.calls .cv + .cb:last-child { margin-left: 8.500px; }
.leave { margin-left: 10px; width: 92px; height: 32px; border: 0; border-radius: 4px; background: #d13438; color: #fff; font: 700 12.700px "Open Sans"; letter-spacing: -.3px; display: flex; align-items: center; justify-content: center; gap: 8px; }
.leave svg { width: 20px; height: 10px; }

.meeting { height: 628px; flex: none; display: flex; background: #1f1f1f; }
.stage { position: relative; width: 1115px; height: 622px; margin: 3px 0 0 3px; border: 2px solid #fff; background: #e6e6e6; box-shadow: inset 1px 0 #222; padding-left: 1px; color: #444; font-size: 10px; display: flex; flex-direction: column; flex: none; }

/* document window */
.w-title { height: 24px; background: #2a5898; color: #fff; display: grid; grid-template-columns: 400px 307px 403px; align-items: center; flex: none; }
.qat { display: grid; grid-template-columns: 26px 22px 6px 24px 22px; margin: -2px 0 0 12px; justify-items: center; align-items: center; }
.qat svg { width: 12px; height: 12px; }
.car, .qat svg.car { width: 6px; height: 4px; }
.w-name { text-align: center; font-size: 9.500px; letter-spacing: -.08px; padding: 3px 0 0 1px; }
.w-ctl { display: grid; grid-template-columns: repeat(4, 37.500px); justify-content: end; justify-items: center; margin: -2px 1px 0 0; }
.w-ctl svg { width: 12px; height: 12px; }
.w-tabs { height: 23px; background: #2a5898; color: #fff; display: grid; grid-template-columns: 53px 48px 49px 51px 54px 69px 60px 53px 45px 49px 182px 331px 51px; grid-template-rows: 23px; justify-items: center; align-items: center; flex: none; font-size: 9.600px; letter-spacing: -.05px; justify-content: start; line-height: 25px; white-space: nowrap; }
.w-tabs .file-tab { padding-right: 2px; }
.w-tabs .active { background: #f3f3f3; color: #2a5898; justify-self: stretch; text-align: center; height: 20px; line-height: 20px; align-self: end; }
.w-tabs .tell { display: flex; gap: 5px; align-items: center; color: #bccde6; justify-self: start; padding-left: 13px; font-size: 9.500px; letter-spacing: -.1px; }
.tell svg { width: 9px; height: 13px; }
.signin { justify-self: end; padding-right: 8px; }
.wshare { display: flex; align-items: center; justify-content: center; gap: 3px; background: #17447f; width: 51px; height: 19px; font-size: 9.600px; align-self: end; margin-bottom: 1px; }
.wshare svg { width: 12px; height: 12px; }

.ribbon { height: 75px; background: #f1f1f1; border-bottom: 1px solid #d2d2d2; flex: none; display: grid; grid-template-columns: 130px 213px 182px 490px 64px 31px; }
.grp { border-right: 1px solid #d8d8d8; margin: 4px 0 2px; display: grid; grid-template-rows: 27px 24px 17px; position: relative; align-items: center; }
.glabel { grid-row: 3; grid-column: 1 / -1; text-align: center; color: #666; font-size: 9.100px; position: relative; line-height: 16px; padding-right: 12px; margin-top: 9px; }
.glabel svg { position: absolute; right: 4px; top: 5px; width: 7px; height: 7px; }
.ribbon .car { color: #666; }
.clip { grid-template-columns: 44px 86px; }
.paste { grid-row: 1 / 3; display: flex; flex-direction: column; align-items: center; gap: 1px; color: #333; font-size: 9.500px; line-height: 14px; }
.paste svg { width: 24px; height: 26px; }
.paste svg.car { width: 6px; height: 4px; margin-top: 3px; }
.clip-list, .elist { grid-row: 1 / 3; display: grid; grid-template-rows: repeat(3, 18.500px); align-items: center; font-size: 9.200px; color: #333; white-space: nowrap; margin-top: 1px; letter-spacing: -.05px; }
.clip-list div, .elist div { display: flex; gap: 3px; align-items: center; }
.clip-list svg { width: 12px; height: 12px; margin-left: -2px; }
.clip-list .dim { color: #999; }
.frow1, .frow2, .prow1, .prow2 { display: grid; align-items: center; justify-items: center; margin-left: 3px; height: 20px; justify-content: start; }
.frow1 i, .frow2 i, .prow1 i, .prow2 i { width: 1px; height: 19px; background: #d5d5d5; }
.ic { width: 14px; height: 14px; }
.frow1 { grid-template-columns: 76px 35px 18px 19px 6px 28px 6px 20px; }
.combo { justify-self: stretch; height: 19px; background: #fff; border: 1px solid #c0c0c0; display: flex; align-items: center; justify-content: space-between; padding: 0 3px 0 2px; color: #444; font-size: 9.300px; white-space: nowrap; }
.ga { font-size: 11.500px; color: #555; line-height: 19px; white-space: nowrap; }
.ga sup { font-size: 7px; color: #2b579a; line-height: 0; vertical-align: 6px; }
.ga.small { font-size: 10px; }
.ga.aa { display: flex; align-items: center; gap: 3px; font-size: 10.500px; }
.frow2 { grid-template-columns: 17px 18px 18px 9px 19px 18px 18px 7px 17px 7px 22px 7px 20px 9px; }
.frow2 b { font-size: 10px; color: #444; line-height: 20px; }
.frow2 b sub, .frow2 b sup { font-size: 6px; color: #2b6cb0; line-height: 0; }
.frow2 .it { font-family: "Liberation Serif"; font-style: italic; font-size: 11.500px; }
.frow2 .un { text-decoration: underline; }
.frow2 .st { font-size: 8.300px; text-decoration: line-through; letter-spacing: -.2px; }
.hl { position: relative; width: 13px; height: 14px; font-size: 8px; line-height: 8px; color: #444; border-bottom: 3px solid #fbf51a; font-weight: 600; }
.hl svg { position: absolute; left: 1px; top: -1px; width: 13px; height: 12px; }
.fc { width: 13px; height: 14px; line-height: 11px; text-align: center; border-bottom: 3px solid #e01010; font-size: 11px; font-weight: 600; color: #555; }
.prow1 { grid-template-columns: 18px 8px 19px 9px 18px 9px 8px 18px 18px 7px 18px 6px 20px; }
.prow2 { grid-template-columns: 18px 18px 18px 18px 7px 16px 7px 13px 14px 11px 18px 8px; }
.prow2 .ic { width: 13px; }
.sel { background: #c5c5c5; width: 18px; height: 18px; display: grid; place-items: center; }
.pil { font-size: 12px; color: #666; }
.styles { padding-left: 4px; }
.gallery { grid-row: 1 / 3; width: 480px; height: 48px; background: #fff; border: 1px solid #c8c8c8; display: grid; grid-template-columns: repeat(8, 58.300px) 12px; align-self: start; margin-top: 1px; }
.sty { text-align: center; overflow: hidden; display: grid; grid-template-rows: 30px 14px; white-space: nowrap; height: 46px; }
.sty p { font: 10.700px/34px Lato, sans-serif; color: #111; letter-spacing: -.05px; width: 49px; margin: 0 auto; overflow: hidden; text-align: left; height: 29px; }
.sty span { font-size: 9.200px; line-height: 15px; color: #555; }
.picked { border: 2px solid #c0c0c0; }
.picked p { line-height: 31px; margin-top: -1px; }
.picked span { line-height: 10px; }
.h1 p { font-size: 14px; color: #6f9dc4; }
.h2 p { font-size: 12px; color: #6f9dc4; }
.tt p { font-size: 25px; line-height: 26px; font-weight: 300; color: #000; }
.sb p { font-size: 10.500px; color: #666; letter-spacing: .6px; }
.se p { font-style: italic; color: #444; }
.em p { font-style: italic; }
.gscroll { border-left: 1px solid #c8c8c8; display: grid; grid-template-rows: repeat(3, 1fr); }
.gscroll div { display: grid; place-items: center; border-bottom: 1px solid #c8c8c8; }
.gscroll div:first-child { background: #ddd; }
.gscroll div:last-child { border: 0; }
.gscroll svg { width: 6px; height: 6px; }
.elist { padding-left: 7px; }
.elist svg { width: 12px; height: 12px; }
.elist svg.car { width: 6px; height: 4px; margin-left: -1px; }
.elist svg.far { margin-left: 3px; }
.rep { width: 13px; margin-right: -1px; display: grid; grid-template-rows: 7px 7px; font-size: 6.500px; line-height: 7px; color: #444; }
.rep u { color: #2b6cb0; text-decoration: none; justify-self: end; }
.edit .glabel { padding: 0; }
.collapse { width: 9px; height: 9px; color: #666; align-self: end; margin: 0 0 2px 13px; }

.w-body { height: 441px; display: flex; flex: none; position: relative; }
.recovery { position: relative; width: 200px; border-right: 1px solid #cdcdcd; background: #e6e6e6; padding: 11px 10px 0 13px; display: flex; flex-direction: column; }
.recovery h1 { font-size: 16px; line-height: 22px; font-weight: 400; color: #44699d; letter-spacing: -.02px; white-space: nowrap; }
.recovery p { font-size: 8.800px; line-height: 11px; margin-top: 6px; letter-spacing: .14px; white-space: nowrap; color: #555; }
.recovery h2 { font-size: 9.200px; line-height: 12px; margin-top: 12px; border-bottom: 1px solid #c4c4c4; font-weight: 600; height: 12px; }
.files { background: #fff; border: 1px solid #b4b4b4; margin: 3px 0 0 7px; height: 287px; width: 169px; padding: 4px 0 0 9px; }
.file { display: flex; gap: 7px; height: 56.700px; font-size: 8.700px; letter-spacing: .09px; line-height: 12px; color: #222; white-space: nowrap; }
.file svg { width: 14px; height: 14px; }
.which { display: flex; gap: 5px; align-items: center; margin-top: 18px; height: 15px; color: #3f6a94; font-size: 9px; white-space: nowrap; letter-spacing: .06px; }
.which b { width: 13px; height: 13px; border-radius: 50%; background: #3d6da0; color: #fff; line-height: 13px; text-align: center; font-size: 10px; }
.close { align-self: flex-end; width: 38px; height: 19px; margin-top: 4px; border: 1px solid #b8b8b8; background: #fdfdfd; text-align: center; line-height: 18px; font-size: 9px; }
.capture { position: absolute; left: 52px; top: 49px; width: 109px; height: 22px; background: #1b1b1b; display: grid; grid-template-columns: 11px 22px 22px 22px 22px; align-items: center; justify-items: center; }
.capture svg { width: 16px; height: 15px; }
.capture .mini { width: 8px; height: 14px; }

.page { position: relative; width: 894px; height: 428px; background: #fff; padding: 71px 0 0 20px; font: 17.700px/25.500px Lato, Carlito, sans-serif; color: #1c1c1c; white-space: nowrap; }
.page p { height: 25.500px; letter-spacing: .11px; }
.page p.wide { letter-spacing: .18px; }
.page p.short { letter-spacing: .04px; }
.page .end { margin-bottom: 14.200px; }
.cursor { display: inline-block; width: 1px; height: 24px; background: #000; margin: -6px -1px -6px 0; vertical-align: middle; }
.gram, .spell { text-decoration-line: underline; text-decoration-style: wavy; text-decoration-thickness: 1px; text-underline-offset: 2px; text-decoration-color: #3a5fd0; }
.spell { text-decoration-color: #d33; }
.ibeam { position: absolute; left: 594px; top: 147px; width: 8px; height: 14px; }
.sharing { position: absolute; left: 385px; top: 392px; width: 340px; height: 36px; background: #fff; border: 1px solid #ddd; box-shadow: 0 3px 8px rgba(0,0,0,.35); display: grid; grid-template-columns: 21px 195px 82px 40px; align-items: center; color: #333; font-size: 9.200px; white-space: nowrap; letter-spacing: -.05px; }
.sharing i { width: 5px; height: 10px; border: solid #c4c4c4; border-width: 0 1.500px; margin-left: 8px; }
.sharing b { background: #0a78d4; color: #fff; height: 26px; line-height: 26px; border-radius: 3px; text-align: center; font-weight: 700; font-size: 9px; }
.sharing u { color: #2f6fae; text-align: center; }

.w-status { height: 20px; background: #f1f1f1; border: solid #c9c9c9; border-width: 1px 0; display: flex; align-items: center; flex: none; padding: 0 9px 0 7px; font-size: 8.900px; color: #555; }
.words { margin-left: 17px; }
.proof { width: 13px; height: 11px; margin-left: 15px; }
.views { margin-left: auto; display: grid; grid-template-columns: repeat(3, 30.500px); height: 18px; }
.views div { display: grid; place-items: center; }
.views svg { width: 13px; height: 11px; }
.views .cur { background: #cbcbcb; }
.slider { display: grid; grid-template-columns: 10px 82px 10px; width: 102px; height: 18px; align-items: center; margin: 0 10px 0 2px; }
.slider em { font: 13px/16px "Open Sans"; text-align: center; }
.slider div { height: 10px; background: linear-gradient(#666, #666) 46px 0 / 3px 10px no-repeat, linear-gradient(#bbb, #bbb) 0 5px / 100% 1px no-repeat; }

.s-task { position: relative; height: 35px; flex: none; background: linear-gradient(90deg, #d3dff0, #d9def0 55%, #dcecf6 85%); display: flex; --hole: #e4ebf5; }
.s-apps { margin-left: 145.500px; display: grid; grid-template-columns: repeat(21, 35.660px); }
.s-apps div { display: flex; flex-direction: column; align-items: center; position: relative; padding-top: 9px; }
.s-apps svg { width: 20px; height: 20px; }
.s-apps .pre { position: absolute; left: 14px; top: 21px; background: #f8c512; color: #111; border-radius: 2px; padding: 0 1px; font-size: 5.500px; line-height: 7px; }
.s-apps .hot { background: #f3dfe5; margin: 3px 2px 1px; border-radius: 4px; padding-top: 6px; }
.s-apps .act { background: #f3f6fb; margin: 3px 3px 1px; border-radius: 4px; padding-top: 6px; }
.s-apps s { width: 5px; height: 2px; border-radius: 1px; background: #8a8d96; margin-top: 3px; }
.s-apps .hot s { background: #c1272d; }
.s-apps .act s { width: 13px; background: #1268b3; }
.s-tray { margin-left: 9.500px; display: grid; grid-template-columns: 27px 25px 26px 13px 27px 52px 25px; align-items: center; justify-items: center; color: #333; }
.s-tray svg { width: 11px; height: 11px; }
.s-tray .bl { color: #2f6298; width: 14px; height: 14px; }
.s-tray svg:nth-child(5), .s-tray .bell { width: 13px; height: 13px; }
.s-clock { justify-self: end; text-align: right; font-size: 9.200px; line-height: 13px; color: #333; white-space: nowrap; }
.ghost { position: absolute; left: 19px; top: 4px; color: #333; font-size: 8px; }
.tag, .tag2 { position: absolute; top: 3px; height: 25px; border-radius: 4px; background: rgba(58,60,64,.66); color: #fff; }
.tag { left: 7px; width: 165px; line-height: 25px; font-size: 11.500px; padding-left: 6px; white-space: nowrap; letter-spacing: -.07px; }
.tag2 { left: 179px; width: 66px; }
.tag2 svg { width: 12px; height: 12px; margin: 6px 0 0 42px; }

/* participants */
.roster { width: 248px; display: flex; flex-direction: column; }
.people-grid { height: 490px; padding: 32px 0 0 13px; display: grid; grid-template-columns: 110px 110px; grid-template-rows: repeat(4, 110px); --slash: #1f1f1f; }
.p { display: flex; flex-direction: column; align-items: center; }
.av { width: 70px; height: 70px; border-radius: 50%; display: grid; place-items: center; font: 600 25.500px/68px "Open Sans"; letter-spacing: -.3px; }
.p div { width: 94px; display: flex; align-items: center; justify-content: space-between; margin-top: 7px; height: 16px; font-size: 11.700px; letter-spacing: -.2px; white-space: nowrap; }
.p div svg { width: 13px; height: 13px; margin: -1px 2px 0 0; }
.p.all div { justify-content: center; }
.co { background: #fdead6; color: #8e5a22; }
.ms { background: #cedbea; color: #123a66; }
.sm { background: #ebd4e2; color: #5f1b4a; }
.k1 { background: #e2dfef; color: #463f6e; }
.kk { background: #f4d3e0; color: #7c1c44; }
.sg { background: #fbdfd9; color: #8a3528; }
.more { background: #292929; border: 1px solid #606060; }
.more svg { width: 21px; height: 6px; }
.self { width: 241px; height: 133px; margin-left: 2px; background: #323232; display: grid; place-items: center; }
.self .av { width: 56px; height: 56px; font-size: 20.500px; line-height: 56px; letter-spacing: .4px; }

/* desktop taskbar */
.taskbar { height: 48px; flex: none; background: #202023; border-top: 1px solid #454545; display: flex; align-items: center; position: relative; }
.weather { width: 252px; display: flex; margin-left: 18px; position: relative; font-size: 11.700px; line-height: 16px; align-items: center; flex: none; }
.weather svg { width: 26px; height: 30px; margin: -5px 6px 0 0; }
.weather b { position: absolute; left: 12px; top: 0; width: 16px; height: 16px; border-radius: 50%; background: #ff99a4; color: #222; font-weight: 400; font-size: 11px; text-align: center; line-height: 16px; margin-top: -4px; }
.weather div { margin-top: -3px; }
.weather span { color: #ccc; }
.start { width: 24px; height: 24px; margin-left: 1px; }
.search { width: 220px; height: 32px; border-radius: 16px; background: #39393b; border: 1px solid #4b4b4d; margin: -1px 0 0 13px; display: flex; align-items: center; padding-left: 11px; font-size: 13.200px; color: #ccc; flex: none; }
.search svg { width: 16px; height: 16px; margin-right: 9px; }
.search span { width: 138px; }
.search svg.berry { width: 34px; height: 24px; margin: 0; }
.apps { margin-left: 2px; display: grid; grid-template-columns: repeat(13, 44px); height: 47px; flex: none; }
.apps div { position: relative; display: flex; flex-direction: column; align-items: center; padding-top: 11px; }
.apps svg { width: 24px; height: 24px; }
.apps s { width: 6px; height: 3px; border-radius: 2px; background: #9a9a9c; margin-top: 4px; }
.apps .cur { background: #2f2f32; border-radius: 5px; margin: 3px 3px 4px 2px; padding-top: 8px; box-shadow: 1px 0 0 1px #3b3b3e; }
.apps .cur s { width: 16px; background: #f07f62; margin-top: 3px; }
.apps b { position: absolute; font-size: 8.500px; line-height: 8px; }
.apps .pre { left: 16px; top: 27px; background: #f8c512; color: #111; border-radius: 2px; padding: 0 2px; height: 8px; font-size: 7.500px; }
.apps .m { left: 23px; top: 6px; width: 16px; height: 16px; border-radius: 50%; background: #4a5c68; line-height: 16px; text-align: center; font-size: 9.500px; font-weight: 400; }
.apps .lite { background: #6f8b98; }
.apps .eight { background: #f5785d; color: #111; font-size: 11px; }
.apps .two { background: #c72a20; font-size: 11px; top: 3px; }
.apps .new { left: 15px; top: 22px; background: #18dde0; color: #111; border-radius: 2px; padding: 0 1px; height: 8px; font-size: 7px; }
.tray { margin: -2px 0 0 14px; display: grid; grid-template-columns: 30px 34px 30px 15px 34px 63px 32px; align-items: center; justify-items: center; }
.tray svg { width: 16px; height: 16px; }
.tray svg:first-child { width: 12px; height: 12px; }
.tray .or { color: #e88b66; }
.clock { justify-self: end; text-align: right; font-size: 11.700px; line-height: 16px; letter-spacing: -.07px; white-space: nowrap; }
```
